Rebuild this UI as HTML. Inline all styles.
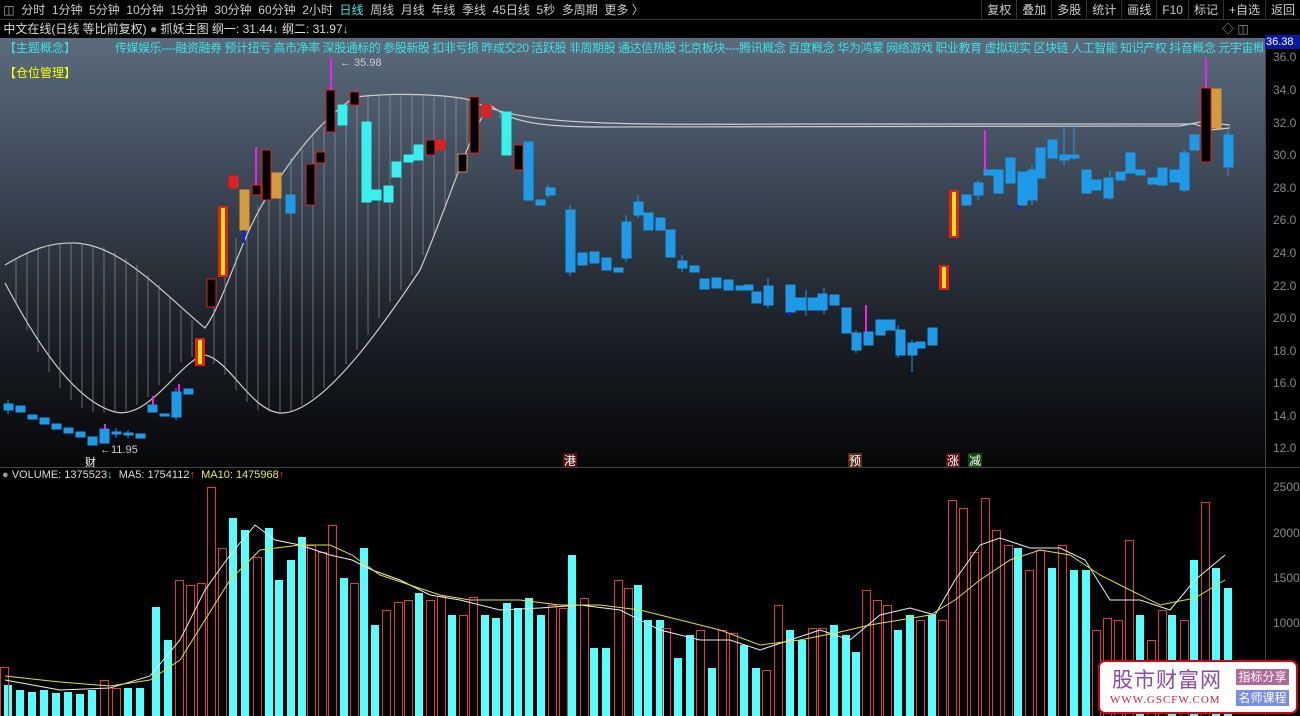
<!DOCTYPE html>
<html><head><meta charset="utf-8"><style>
*{margin:0;padding:0;box-sizing:border-box}
body{width:1300px;height:716px;overflow:hidden;background:#000;font-family:"Liberation Sans","Noto Sans CJK SC",sans-serif;font-size:12px;color:#ddd;position:relative}
.top{position:absolute;left:0;top:0;width:1300px;height:20px;background:#000;border-bottom:1px solid #333;white-space:nowrap}
.top span{display:inline-block;padding:0 3.3px;line-height:20px;color:#ccc}
.r2{position:absolute;left:0;top:20px;width:1300px;height:18px;background:#000;white-space:nowrap;line-height:18px;color:#ddd}
.rb{position:absolute;right:0;top:0;height:20px}
.rb span{display:inline-block;line-height:20px;padding:0 5px;border-left:1px solid #333;color:#ccc}
.main{position:absolute;left:0;top:38px;width:1265px;height:429px;background:linear-gradient(#5b6b7d 0%,#3b4654 35%,#1a1e25 70%,#060708 100%)}
.axis{position:absolute;left:1265px;top:38px;width:35px;height:678px;background:#000;border-left:1px solid #444}
.ax{position:absolute;left:1273px;color:#888;font-size:12px}
.wm{position:absolute;left:1098px;top:660px;width:200px;height:54px;background:#fff;border:2px solid #d00018;border-radius:7px}
svg rect{shape-rendering:crispEdges}
</style></head><body>
<div class="top"><span style="color:#aaa">◫</span><span>分时</span><span>1分钟</span><span>5分钟</span><span>10分钟</span><span>15分钟</span><span>30分钟</span><span>60分钟</span><span>2小时</span><span style="color:#3ee">日线</span><span>周线</span><span>月线</span><span>年线</span><span>季线</span><span>45日线</span><span>5秒</span><span>多周期</span><span>更多 〉</span>
<div class="rb"><span>复权</span><span>叠加</span><span>多股</span><span>统计</span><span>画线</span><span>F10</span><span>标记</span><span>+自选</span><span>返回</span></div></div>
<div class="r2">&nbsp;中文在线(日线 等比前复权) <span style="color:#999">●</span> 抓妖主图 纲一: 31.44<span style="color:#3ee">↓</span> 纲二: 31.97<span style="color:#3ee">↓</span><span style="position:absolute;left:1222px;color:#999">◇ ◫</span></div>
<div class="main"></div>
<div style="position:absolute;left:4px;top:39px;color:#3de0e0;font-size:12px">【主题概念】</div>
<div style="position:absolute;left:115px;top:39px;width:1148px;overflow:hidden;color:#3de0e0;font-size:12px;white-space:nowrap;letter-spacing:-0.45px">传媒娱乐----融资融券 预计扭亏 高市净率 深股通标的 参股新股 扣非亏损 昨成交20 活跃股 非周期股 通达信热股 北京板块----腾讯概念 百度概念 华为鸿蒙 网络游戏 职业教育 虚拟现实 区块链 人工智能 知识产权 抖音概念 元宇宙概念 N</div>
<div style="position:absolute;left:4px;top:64px;color:#ff0;font-size:12px">【仓位管理】</div>
<svg style="position:absolute;left:0;top:0" width="1265" height="716">
<g fill="none" stroke="#ccc" stroke-width="1.2">
<path d="M5,265 C30,250 50,242 75,243 C120,245 160,290 205,328 C225,300 240,240 265,200 C290,160 320,120 355,97 C400,92 450,95 470,100 C520,125 600,125 800,124 L1195,124 L1210,130 L1230,128"/>
<path d="M5,283 C30,330 70,400 115,412 C150,420 180,360 205,355 C230,360 250,410 280,413 C320,415 380,330 420,270 C450,200 470,130 490,105 C510,120 530,127 600,127 L1180,126 L1200,122 L1230,125"/>
</g>
<g stroke="#aaa" stroke-width="0.7" opacity="0.8">
<path d="M16,258V305M27,253V330M38,249V352M49,246V372M60,244V388M71,243V400M82,243V408M93,245V412M104,247V413M115,252V412M126,258V410M137,265V405M148,275V397M159,285V385M170,297V373M181,310V362M192,320V357M214,300V364M225,265V375M236,238V390M247,222V402M258,205V410M269,188V412M280,172V413M291,158V412M302,147V405M313,137V398M324,127V388M335,118V376M346,108V364M357,97V350M368,96V335M379,95V318M390,95V302M401,94V290M412,94V275M423,94V255M434,95V235M445,96V210M456,97V180M467,99V145M478,104V118M489,106V110M500,110V118M511,115V121"/>
</g>
<g stroke="#1e9be8" stroke-width="1"><path d="M8,400V414M116,428V438M128,430V438M176,388V420M548,185V198M570,205V276M626,215V262M638,195V218M682,255V272M768,278V308M806,290V316M824,288V314M856,330V353M898,325V358M912,340V372M978,180V200M1032,165V205M1064,125V165M1074,125V160M1110,170V200M1184,150V192M1228,130V176"/></g>
<g stroke-width="1">
<g fill="#1e9be8" stroke="#1e9be8">
<rect x="4" y="404" width="9" height="6"/><rect x="16" y="406" width="9" height="6"/><rect x="28" y="415" width="9" height="4"/><rect x="40" y="418" width="9" height="6"/><rect x="52" y="424" width="9" height="5"/><rect x="64" y="428" width="9" height="5"/><rect x="76" y="432" width="9" height="5"/><rect x="88" y="437" width="9" height="8"/><rect x="100" y="429" width="9" height="14"/><rect x="112" y="432" width="9" height="2"/><rect x="124" y="433" width="9" height="2"/><rect x="136" y="434" width="9" height="4"/><rect x="148" y="405" width="9" height="7"/><rect x="160" y="414" width="9" height="2"/><rect x="172" y="392" width="9" height="25"/><rect x="184" y="389" width="9" height="5"/>
<rect x="286" y="195" width="9" height="18"/>
<rect x="524" y="142" width="9" height="58"/><rect x="536" y="200" width="9" height="5"/><rect x="546" y="188" width="9" height="7"/><rect x="566" y="210" width="9" height="62"/><rect x="578" y="253" width="9" height="12"/><rect x="590" y="252" width="9" height="11"/><rect x="602" y="258" width="9" height="12"/><rect x="614" y="268" width="9" height="4"/><rect x="622" y="222" width="9" height="36"/><rect x="634" y="202" width="9" height="13"/><rect x="644" y="213" width="9" height="17"/><rect x="656" y="218" width="9" height="12"/><rect x="666" y="230" width="9" height="27"/><rect x="678" y="261" width="9" height="7"/><rect x="690" y="266" width="9" height="6"/><rect x="700" y="279" width="9" height="10"/><rect x="712" y="278" width="9" height="10"/><rect x="724" y="280" width="9" height="10"/><rect x="736" y="286" width="9" height="4"/><rect x="744" y="285" width="9" height="5"/><rect x="752" y="292" width="9" height="11"/><rect x="764" y="286" width="9" height="19"/><rect x="786" y="285" width="9" height="27"/><rect x="796" y="298" width="9" height="12"/><rect x="808" y="298" width="9" height="12"/><rect x="818" y="294" width="9" height="16"/><rect x="830" y="295" width="9" height="10"/><rect x="842" y="308" width="9" height="25"/><rect x="852" y="333" width="9" height="17"/><rect x="864" y="332" width="9" height="13"/><rect x="876" y="320" width="9" height="15"/><rect x="886" y="320" width="9" height="10"/><rect x="896" y="330" width="9" height="25"/><rect x="908" y="343" width="9" height="12"/><rect x="916" y="342" width="9" height="6"/><rect x="928" y="328" width="9" height="17"/>
<rect x="962" y="195" width="9" height="10"/><rect x="974" y="183" width="9" height="12"/><rect x="984" y="170" width="9" height="5"/><rect x="994" y="170" width="9" height="23"/><rect x="1006" y="158" width="9" height="25"/><rect x="1018" y="172" width="9" height="33"/><rect x="1028" y="170" width="9" height="30"/><rect x="1036" y="148" width="9" height="30"/><rect x="1048" y="140" width="9" height="18"/><rect x="1060" y="155" width="9" height="5"/><rect x="1070" y="155" width="9" height="3"/><rect x="1082" y="170" width="9" height="23"/><rect x="1092" y="180" width="9" height="10"/><rect x="1104" y="178" width="9" height="20"/><rect x="1116" y="172" width="9" height="8"/><rect x="1126" y="153" width="9" height="20"/><rect x="1136" y="170" width="9" height="5"/><rect x="1148" y="178" width="9" height="6"/><rect x="1158" y="168" width="9" height="17"/><rect x="1170" y="170" width="9" height="12"/><rect x="1180" y="153" width="9" height="37"/><rect x="1190" y="135" width="9" height="15"/><rect x="1224" y="135" width="9" height="32"/>
</g>
<g fill="#38f0f0" stroke="#38f0f0">
<rect x="338" y="105" width="9" height="20"/><rect x="362" y="122" width="9" height="80"/><rect x="372" y="190" width="9" height="10"/><rect x="384" y="186" width="9" height="16"/><rect x="392" y="162" width="9" height="15"/><rect x="404" y="155" width="9" height="7"/><rect x="414" y="145" width="9" height="15"/><rect x="502" y="112" width="9" height="43"/>
</g>
<g fill="#000" stroke="#e02020">
<rect x="207" y="279" width="9" height="28"/><rect x="252" y="185" width="9" height="10"/><rect x="262" y="150" width="9" height="50"/><rect x="306" y="164" width="9" height="41"/><rect x="316" y="152" width="9" height="11"/><rect x="326" y="90" width="9" height="42"/><rect x="350" y="92" width="9" height="13"/><rect x="426" y="140" width="9" height="15"/><rect x="470" y="97" width="9" height="56"/><rect x="514" y="145" width="9" height="25"/><rect x="1201" y="88" width="10" height="74"/>
</g>
<rect x="458" y="154" width="9" height="18" fill="#000" stroke="#d49a3c"/>
<g fill="#e02020" stroke="#e02020"><rect x="229" y="176" width="9" height="12"/><rect x="436" y="140" width="9" height="10"/><rect x="482" y="105" width="9" height="12"/></g>
<g fill="#d49a3c" stroke="#d49a3c"><rect x="240" y="190" width="9" height="40"/><rect x="272" y="173" width="9" height="25"/><rect x="1212" y="89" width="9" height="39"/></g>
<g fill="#e02020"><rect x="195" y="338" width="10" height="28"/><rect x="218" y="206" width="10" height="71"/><rect x="939" y="265" width="10" height="25"/><rect x="949" y="190" width="10" height="48"/></g>
<g fill="#ffe600"><rect x="198" y="340" width="4" height="24"/><rect x="221" y="208" width="4" height="67"/><rect x="942" y="267" width="4" height="21"/><rect x="952" y="192" width="4" height="44"/></g>
<g stroke="#ee22ee" stroke-width="2"><path d="M105,429V424M153,405V396M179,392V384M256,185V147M331,90V58M866,332V305M985,170V130M1206,88V58"/></g>
<g stroke="#1020ff" stroke-width="2"><path d="M244,230V243M1018,205V210M790,312V316"/></g>
</g>
<text x="340" y="66" fill="#ccc" font-size="11" font-family="Liberation Sans">← 35.98</text>
<text x="100" y="453" fill="#ccc" font-size="11" font-family="Liberation Sans">←11.95</text>
<text x="85" y="466" fill="#fff" font-size="11" font-family="Noto Sans CJK SC">财</text>
<rect x="563" y="453" width="14" height="14" fill="#5a1010"/><text x="564" y="465" fill="#fff" font-size="12" font-family="Noto Sans CJK SC">港</text>
<rect x="848" y="453" width="14" height="14" fill="#5a2a10"/><text x="849" y="465" fill="#fff" font-size="12" font-family="Noto Sans CJK SC">预</text>
<rect x="946" y="453" width="14" height="14" fill="#5a1010"/><text x="947" y="465" fill="#fff" font-size="12" font-family="Noto Sans CJK SC">涨</text>
<rect x="968" y="453" width="14" height="14" fill="#104a10"/><text x="969" y="465" fill="#fff" font-size="12" font-family="Noto Sans CJK SC">减</text>
<line x1="0" y1="467.5" x2="1265" y2="467.5" stroke="#444"/>
<g fill="#55ffff">
<rect x="4" y="685" width="8" height="31"/><rect x="16" y="690" width="8" height="26"/><rect x="28" y="692" width="8" height="24"/><rect x="40" y="690" width="8" height="26"/><rect x="52" y="693" width="8" height="23"/><rect x="64" y="692" width="8" height="24"/><rect x="76" y="694" width="8" height="22"/><rect x="88" y="690" width="8" height="26"/><rect x="124" y="688" width="8" height="28"/><rect x="136" y="688" width="8" height="28"/>
<rect x="152" y="607" width="8" height="109"/><rect x="164" y="640" width="8" height="76"/><rect x="229" y="518" width="8" height="198"/><rect x="241" y="530" width="8" height="186"/><rect x="265" y="528" width="8" height="188"/><rect x="275" y="580" width="8" height="136"/><rect x="287" y="560" width="8" height="156"/><rect x="298" y="537" width="8" height="179"/><rect x="340" y="578" width="8" height="138"/><rect x="360" y="548" width="8" height="168"/><rect x="371" y="625" width="8" height="91"/><rect x="415" y="593" width="8" height="123"/><rect x="448" y="615" width="8" height="101"/><rect x="481" y="615" width="8" height="101"/><rect x="492" y="618" width="8" height="98"/><rect x="503" y="603" width="8" height="113"/><rect x="514" y="608" width="8" height="108"/><rect x="525" y="598" width="8" height="118"/><rect x="537" y="615" width="8" height="101"/><rect x="568" y="555" width="8" height="161"/><rect x="590" y="648" width="8" height="68"/><rect x="602" y="648" width="8" height="68"/><rect x="634" y="585" width="8" height="131"/><rect x="644" y="620" width="8" height="96"/><rect x="656" y="620" width="8" height="96"/><rect x="674" y="658" width="8" height="58"/><rect x="686" y="635" width="8" height="81"/><rect x="708" y="668" width="8" height="48"/><rect x="740" y="645" width="8" height="71"/><rect x="752" y="668" width="8" height="48"/><rect x="786" y="630" width="8" height="86"/><rect x="798" y="640" width="8" height="76"/><rect x="830" y="625" width="8" height="91"/><rect x="842" y="635" width="8" height="81"/><rect x="852" y="652" width="8" height="64"/><rect x="894" y="630" width="8" height="86"/><rect x="906" y="615" width="8" height="101"/><rect x="928" y="615" width="8" height="101"/><rect x="1014" y="548" width="8" height="168"/><rect x="1048" y="568" width="8" height="148"/><rect x="1070" y="570" width="8" height="146"/><rect x="1082" y="570" width="8" height="146"/><rect x="1136" y="615" width="8" height="101"/><rect x="1168" y="615" width="8" height="101"/><rect x="1190" y="560" width="8" height="156"/><rect x="1212" y="568" width="8" height="148"/><rect x="1224" y="588" width="8" height="128"/>
</g>
<g fill="none" stroke="#e03a3a" transform="translate(0.5,0.5)">
<rect x="0" y="667" width="8" height="50"/><rect x="100" y="680" width="8" height="40"/><rect x="112" y="688" width="8" height="30"/><rect x="175" y="580" width="8" height="140"/><rect x="186" y="585" width="8" height="140"/><rect x="197" y="583" width="8" height="140"/><rect x="207" y="487" width="8" height="240"/><rect x="218" y="548" width="8" height="200"/><rect x="253" y="557" width="8" height="170"/><rect x="307" y="545" width="8" height="180"/><rect x="318" y="552" width="8" height="180"/><rect x="328" y="525" width="8" height="200"/><rect x="350" y="583" width="8" height="140"/><rect x="382" y="610" width="8" height="120"/><rect x="394" y="602" width="8" height="120"/><rect x="404" y="600" width="8" height="120"/><rect x="426" y="600" width="8" height="120"/><rect x="437" y="596" width="8" height="120"/><rect x="459" y="615" width="8" height="120"/><rect x="469" y="597" width="8" height="120"/><rect x="548" y="605" width="8" height="120"/><rect x="559" y="608" width="8" height="120"/><rect x="580" y="598" width="8" height="120"/><rect x="614" y="580" width="8" height="140"/><rect x="624" y="588" width="8" height="130"/><rect x="662" y="628" width="8" height="90"/><rect x="696" y="630" width="8" height="90"/><rect x="718" y="630" width="8" height="90"/><rect x="729" y="633" width="8" height="90"/><rect x="762" y="670" width="8" height="60"/><rect x="774" y="605" width="8" height="120"/><rect x="808" y="628" width="8" height="90"/><rect x="818" y="628" width="8" height="90"/><rect x="862" y="590" width="8" height="130"/><rect x="873" y="600" width="8" height="120"/><rect x="883" y="605" width="8" height="120"/><rect x="916" y="620" width="8" height="100"/><rect x="938" y="620" width="8" height="100"/><rect x="948" y="500" width="8" height="220"/><rect x="959" y="508" width="8" height="220"/><rect x="970" y="552" width="8" height="180"/><rect x="981" y="498" width="8" height="230"/><rect x="992" y="530" width="8" height="200"/><rect x="1004" y="545" width="8" height="180"/><rect x="1025" y="570" width="8" height="150"/><rect x="1036" y="550" width="8" height="170"/><rect x="1058" y="545" width="8" height="180"/><rect x="1092" y="630" width="8" height="90"/><rect x="1103" y="618" width="8" height="100"/><rect x="1114" y="620" width="8" height="100"/><rect x="1125" y="540" width="8" height="180"/><rect x="1147" y="640" width="8" height="80"/><rect x="1158" y="610" width="8" height="110"/><rect x="1180" y="620" width="8" height="100"/><rect x="1201" y="502" width="8" height="220"/>
</g>
<polyline fill="none" stroke="#eee" stroke-width="1" points="5,680 60,690 110,688 150,676 180,640 205,590 230,555 255,525 275,540 300,545 330,555 352,560 372,570 400,580 430,595 460,600 500,610 540,608 580,605 620,610 660,630 700,640 730,640 760,650 790,640 820,630 850,640 880,615 910,608 935,615 955,580 980,545 1000,538 1030,548 1060,548 1085,560 1110,600 1140,600 1170,610 1195,580 1225,555"/>
<polyline fill="none" stroke="#e0e040" stroke-width="1" points="5,676 60,682 110,686 150,680 180,660 205,620 230,580 260,550 300,545 330,545 352,555 380,575 410,585 440,595 470,600 520,600 560,605 600,605 640,610 680,620 720,630 760,645 800,640 840,632 870,625 900,620 930,615 955,600 980,580 1010,560 1040,550 1070,555 1100,575 1130,590 1160,605 1195,598 1225,580"/>
</svg>
<div style="position:absolute;left:2px;top:469px;font-size:11px;color:#ddd;white-space:nowrap"><span style="color:#999">●</span> VOLUME: 1375523<span style="color:#3ee">↓</span>&nbsp; MA5: 1754112<span style="color:#f33">↑</span>&nbsp; <span style="color:#ee4">MA10: 1475968</span><span style="color:#f33">↑</span></div>
<div class="axis"></div>
<div style="position:absolute;left:1265px;top:35px;width:35px;height:14px;background:#0a1aa0;color:#fff;font-size:11px;line-height:14px;padding-left:1px">36.38</div>
<div class="ax" style="top:50px">36.0</div><div class="ax" style="top:83px">34.0</div><div class="ax" style="top:116px">32.0</div><div class="ax" style="top:148px">30.0</div><div class="ax" style="top:181px">28.0</div><div class="ax" style="top:213px">26.0</div><div class="ax" style="top:246px">24.0</div><div class="ax" style="top:279px">22.0</div><div class="ax" style="top:311px">20.0</div><div class="ax" style="top:344px">18.0</div><div class="ax" style="top:376px">16.0</div><div class="ax" style="top:409px">14.0</div><div class="ax" style="top:441px">12.0</div>
<div class="ax" style="top:480px">2500</div><div class="ax" style="top:526px">2000</div><div class="ax" style="top:571px">1500</div><div class="ax" style="top:616px">1000</div>
<div style="position:absolute;left:1265px;top:467px;width:35px;height:1px;background:#444"></div>
<div class="wm">
<div style="position:absolute;left:12px;top:4px;font-size:21px;color:#8a4aa8;font-family:'Noto Sans CJK SC',sans-serif;line-height:26px;letter-spacing:1px">股市财富网</div>
<div style="position:absolute;left:10px;top:32px;font-size:11px;color:#d02040;font-family:'Liberation Serif',serif;letter-spacing:1px">WWW.GSCFW.COM</div>
<div style="position:absolute;left:136px;top:7px;width:53px;height:16px;background:#b06a98;color:#fff;font-size:12px;line-height:16px;text-align:center">指标分享</div>
<div style="position:absolute;left:136px;top:28px;width:53px;height:16px;background:#7a8ee0;color:#fff;font-size:12px;line-height:16px;text-align:center">名师课程</div>
</div>
</body></html>
